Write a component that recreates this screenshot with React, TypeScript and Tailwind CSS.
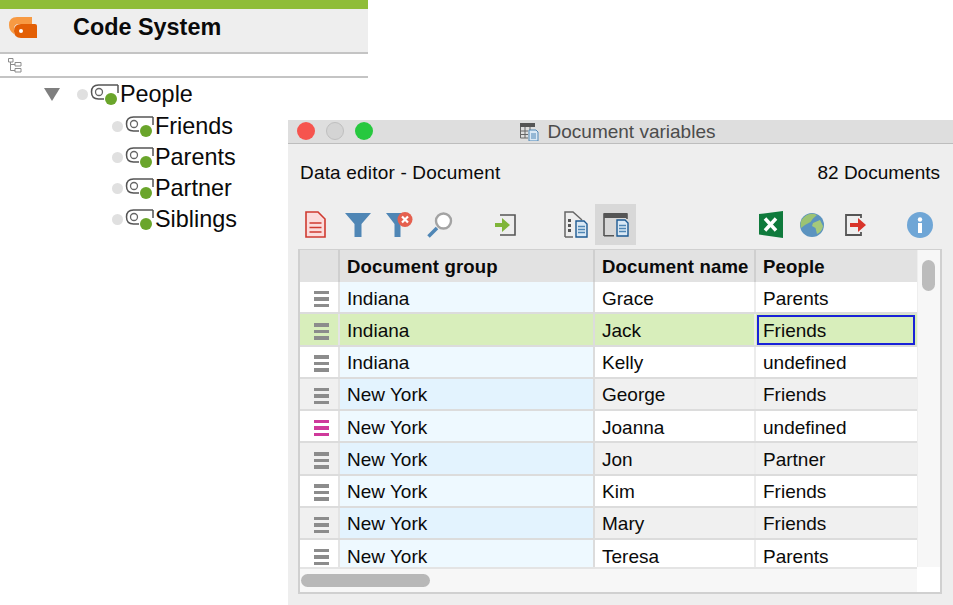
const font = "font-['Liberation_Sans',Arial,sans-serif]"

const rows = [
	{ group: 'Indiana', name: 'Grace', people: 'Parents' },
	{ group: 'Indiana', name: 'Jack', people: 'Friends', selected: true },
	{ group: 'Indiana', name: 'Kelly', people: 'undefined' },
	{ group: 'New York', name: 'George', people: 'Friends' },
	{ group: 'New York', name: 'Joanna', people: 'undefined', pink: true },
	{ group: 'New York', name: 'Jon', people: 'Partner' },
	{ group: 'New York', name: 'Kim', people: 'Friends' },
	{ group: 'New York', name: 'Mary', people: 'Friends' },
	{ group: 'New York', name: 'Teresa', people: 'Parents' },
]

const CodeIcon = () => (
	<svg width="29" height="21" viewBox="0 0 29 21" fill="none" className="shrink-0">
		<path d="M28 1H8.500Q1.500 1 1.500 8Q1.500 15 8.500 15H14M28 1V9" stroke="#555" strokeWidth="1.500" />
		<circle cx="9" cy="8" r="3.500" stroke="#666" strokeWidth="1.300" />
		<circle cx="21" cy="15" r="6" fill="#6aa52b" />
	</svg>
)

const TreeRow = ({ label, child }: { label: string; child?: boolean }) => (
	<div className={`flex items-center h-[31px] ${child ? 'pl-[112px]' : 'pl-[44px] mb-[1px]'}`}>
		{!child && (
			<svg width="16" height="13" viewBox="0 0 16 13" className="mr-[17px] shrink-0">
				<path d="M0 0H16L8 13Z" fill="#7f7f7f" />
			</svg>
		)}
		<span className="w-[11px] h-[11px] rounded-full bg-[#e0e0e0] mr-[2px] -mt-[1px] shrink-0" />
		<CodeIcon />
		<span className="text-[23.4px] leading-none text-[#0a0a0a] ml-[1px]">{label}</span>
	</div>
)

const GutterIcon = ({ pink }: { pink?: boolean }) => (
	<div className="flex flex-col gap-[3px] w-[15px]">
		{[0, 1, 2].map((i) => (
			<span key={i} className={`h-[3.5px] ${pink ? 'bg-[#cf3a9b]' : 'bg-[#8c8c8c]'}`} />
		))}
	</div>
)

const DocRed = () => (
	<svg width="22" height="27" viewBox="0 0 22 27">
		<path d="M2 1H14L21 8V26H2Z" fill="#fbdcdc" stroke="#cf3a30" strokeWidth="1.600" />
		<path d="M5.500 12H17.500M5.500 16.500H17.500M5.500 21H17.500" stroke="#cf3a30" strokeWidth="1.600" />
	</svg>
)

const Funnel = () => (
	<svg width="26" height="26" viewBox="0 0 26 26">
		<path d="M0 1H26L16.500 12V25H9.500V12Z" fill="#4f86b5" />
	</svg>
)

const FunnelX = () => (
	<svg width="27" height="26" viewBox="0 0 27 26">
		<path d="M0 1H22L14.500 12V25H8.500V12Z" fill="#4f86b5" />
		<circle cx="19" cy="7.500" r="7.500" fill="#e5604f" />
		<path d="M16 4.500L22 10.500M22 4.500L16 10.500" stroke="#fff" strokeWidth="2.200" />
	</svg>
)

const Lens = () => (
	<svg width="26" height="26" viewBox="0 0 26 26">
		<path d="M1.500 24.500L10 16" stroke="#4f86b5" strokeWidth="3.500" />
		<circle cx="16.500" cy="9" r="7.500" fill="#fff" stroke="#a3a3a3" strokeWidth="2.400" />
	</svg>
)

const Import = () => (
	<svg width="22" height="24" viewBox="0 0 22 24">
		<path d="M5 2H20V22H5" fill="none" stroke="#555" strokeWidth="1.600" />
		<path d="M0 10H7V5L15 12L7 19V14H0Z" fill="#7fb539" />
	</svg>
)

const SmallDoc = ({ x, y }: { x: number; y: number }) => (
	<g transform={`translate(${x} ${y})`}>
		<path d="M1 1H9L12 4V17H1Z" fill="#d9e8f5" stroke="#1d5a92" strokeWidth="1.400" />
		<path d="M3 6.500H10M3 9.500H10M3 12.500H10" stroke="#4f86b5" strokeWidth="1.400" />
	</g>
)

const DocList = () => (
	<svg width="24" height="27" viewBox="0 0 24 27">
		<path d="M1 26V1H9L18 9" fill="none" stroke="#666" strokeWidth="1.500" />
		<path d="M1 26H9" stroke="#666" strokeWidth="1.500" />
		<path d="M4 8H7V11H4ZM4 13H7V16H4ZM4 18H7V21H4Z" fill="#555" />
		<SmallDoc x={11} y={9} />
	</svg>
)

const WinDoc = () => (
	<svg width="26" height="25" viewBox="0 0 26 25">
		<path d="M1 24V2H24V7" fill="none" stroke="#555" strokeWidth="1.600" />
		<path d="M1 1H24V6H1ZM1 23H11V24.500H1Z" fill="#555" />
		<SmallDoc x={13} y={7} />
	</svg>
)

const Excel = () => (
	<svg width="24" height="27" viewBox="0 0 24 27">
		<path d="M0 3L24 0V27L0 23.500Z" fill="#0f7a3c" />
		<path d="M6 7.500L17 19.500M17 7.500L6 19.500" stroke="#fff" strokeWidth="3.500" />
	</svg>
)

const Globe = () => (
	<svg width="24" height="24" viewBox="0 0 24 24">
		<circle cx="12" cy="12" r="12" fill="#5b93bf" />
		<path d="M6 2.500Q11-.5 17 2L13 5.500L10.500 9L5 12L1 15Q-1 7 6 2.500Z" fill="#9cc373" />
		<path d="M13 10L20 7L23 13Q22 19 17 21L15.500 15L12 13Z" fill="#a5c97b" />
	</svg>
)

const Export = () => (
	<svg width="22" height="24" viewBox="0 0 22 24">
		<path d="M17 5V2H2V22H17V19" fill="none" stroke="#555" strokeWidth="1.800" />
		<path d="M6 10H14V5L22 12L14 19V14H6Z" fill="#d8342a" />
	</svg>
)

const Info = () => (
	<svg width="26" height="26" viewBox="0 0 26 26">
		<circle cx="13" cy="13" r="13" fill="#6fa6d6" />
		<rect x="11" y="11" width="4" height="10" fill="#fff" />
		<circle cx="13" cy="7.500" r="2.200" fill="#fff" />
	</svg>
)

const TableIcon = () => (
	<svg width="19" height="18" viewBox="0 0 19 18">
		<path d="M0 0H15V4H0Z" fill="#555" />
		<path d="M.5 4V15H8M5 4V15M10 4V7M.5 8H8M.5 11.500H8" fill="none" stroke="#666" />
		<path d="M9 7H16L18 9V18H9Z" fill="#d9e8f5" stroke="#4f86b5" />
		<path d="M11 11H16M11 13H16M11 15H16" stroke="#4f86b5" />
	</svg>
)

export default function App() {
	return (
		<div className={`relative w-[953px] h-[605px] overflow-hidden bg-white ${font}`}>
			<div className="w-[368px]">
				<div className="h-[9px] bg-[#8fbd38]" />
				<div className="flex items-center h-[43px] pb-[5px] bg-[#eeeeee]">
					<svg width="30" height="24" viewBox="0 0 30 24" className="ml-[8px] shrink-0">
						<path d="M1 9Q1 1 9 1H24V8H11Q6 8 6 13V18Q1 15 1 9Z" fill="#f79a43" />
						<path d="M6 15Q6 8 13 8H27Q29 8 29 10V22H13Q6 22 6 15Z" fill="#e35f05" />
						<circle cx="13" cy="15" r="2" fill="#fff" />
					</svg>
					<span className="ml-[35px] text-[23.4px] font-bold text-[#0a0a0a] leading-none">Code System</span>
				</div>
				<div className="flex items-center h-[26px] bg-white border-y-2 border-[#c4c4c4] pl-[8px]">
					<svg width="14" height="15" viewBox="0 0 14 15" fill="none" stroke="#8c8c8c">
						<path d="M.500.500H5V4H.500ZM7 4.500H13V8H7ZM7 10.500H13V14H7ZM2.500 4V12.500H7M2.500 6.500H7" />
					</svg>
				</div>
				<div className="pt-[1px]">
					<TreeRow label="People" />
					<TreeRow label="Friends" child />
					<TreeRow label="Parents" child />
					<TreeRow label="Partner" child />
					<TreeRow label="Siblings" child />
				</div>
			</div>

			{/* floating window */}
			<div className="absolute left-[288px] top-[120px] w-[665px] h-[485px] flex flex-col bg-[#eeeeee]">
				<div className="relative flex items-center justify-center h-[24px] bg-[#dedede] border-b border-[#bdbdbd]">
					<div className="absolute left-[9px] top-[2px] flex gap-[11px]">
						<span className="w-[18px] h-[18px] rounded-full bg-[#f6544e]" />
						<span className="w-[18px] h-[18px] rounded-full bg-[#d4d4d4] border border-[#bfbfbf]" />
						<span className="w-[18px] h-[18px] rounded-full bg-[#27c83f]" />
					</div>
					<div className="flex items-center gap-[9px] pr-[6px]">
						<TableIcon />
						<span className="text-[19px] leading-none text-[#4c4c4c]">Document variables</span>
					</div>
				</div>

				<div className="flex items-center justify-between h-[60px] pb-[2px] pl-[12px] pr-[13px] text-[19px] text-[#0a0a0a]">
					<span className="tracking-[.18px]">Data editor - Document</span>
					<span>82 Documents</span>
				</div>

				<div className="flex items-center h-[41px] mb-[4px] pl-[16px]">
					<DocRed />
					<div className="ml-[19px]"><Funnel /></div>
					<div className="ml-[15px]"><FunnelX /></div>
					<div className="ml-[14px]"><Lens /></div>
					<div className="ml-[42px]"><Import /></div>
					<div className="ml-[47px]"><DocList /></div>
					<div className="ml-[7px] w-[41px] h-[41px] bg-[#d8d8d8] flex items-center justify-center"><WinDoc /></div>
					<div className="ml-[123px]"><Excel /></div>
					<div className="ml-[17px]"><Globe /></div>
					<div className="ml-[20px]"><Export /></div>
					<div className="ml-[41px]"><Info /></div>
				</div>

				<div className="relative ml-[10px] w-[644px] h-[345px] bg-white border-2 border-t border-[#d0d0d0] flex flex-col">
					<div className="h-[317px] overflow-hidden">
						<div className="grid grid-cols-[40px_255px_161px_161px] h-[32px] bg-[#e2e2e2] text-[18.6px] tracking-[.15px] font-bold text-[#0a0a0a] leading-none">
							<div className="border-r-2 border-[#cfcfcf]" />
							<div className="flex items-center pl-[7px] pt-[2px] border-r-2 border-[#cfcfcf]">Document group</div>
							<div className="flex items-center pl-[7px] pt-[2px] border-r-2 border-[#cfcfcf]">Document name</div>
							<div className="flex items-center pl-[7px] pt-[2px]">People</div>
						</div>
						{rows.map((r, i) => {
							const stripe = i % 2 === 1
							const base = r.selected ? 'bg-[#d8eebb]' : stripe ? 'bg-[#f0f0f0]' : 'bg-white'
							const groupBg = r.selected ? 'bg-[#d8eebb]' : stripe ? 'bg-[#e3f3fe]' : 'bg-[#eef9ff]'
							return (
								<div
									key={i}
									className={`grid grid-cols-[40px_255px_161px_161px] h-[32.25px] border-b-2 border-[#dcdcdc] text-[19px] leading-none text-[#0a0a0a] ${base}`}
								>
									<div className="flex items-center pl-[14px] pt-[4px] border-r-2 border-[#e4e4e4]">
										<GutterIcon pink={r.pink} />
									</div>
									<div className={`flex items-center pl-[7px] pt-[2px] border-r-2 border-[#dcdcdc] ${groupBg}`}>{r.group}</div>
									<div className="flex items-center pl-[7px] pt-[2px] border-r-2 border-[#ececec]">{r.name}</div>
									<div className={`flex items-center pt-[2px] ${r.selected ? 'border-2 border-[#1a22d8] pl-[4px] ml-[1px] mr-[2px] mt-[1px]' : 'pl-[7px]'}`}>{r.people}</div>
								</div>
							)
						})}
					</div>
					<div className="flex-1 flex items-center bg-[#f7f7f7] border-t-2 border-[#e4e4e4] mr-[23px] pl-[1px]">
						<span className="block w-[129px] h-[13px] rounded-full bg-[#b8b8b8]" />
					</div>
					{/* vertical scrollbar */}
					<div className="absolute right-0 top-0 w-[23px] h-[317px] bg-[#f7f7f7] border-l border-[#eeeeee]">
						<span className="block absolute left-[4px] top-[10px] w-[13px] h-[31px] rounded-full bg-[#bcbcbc]" />
					</div>
				</div>
			</div>
		</div>
	)
}
